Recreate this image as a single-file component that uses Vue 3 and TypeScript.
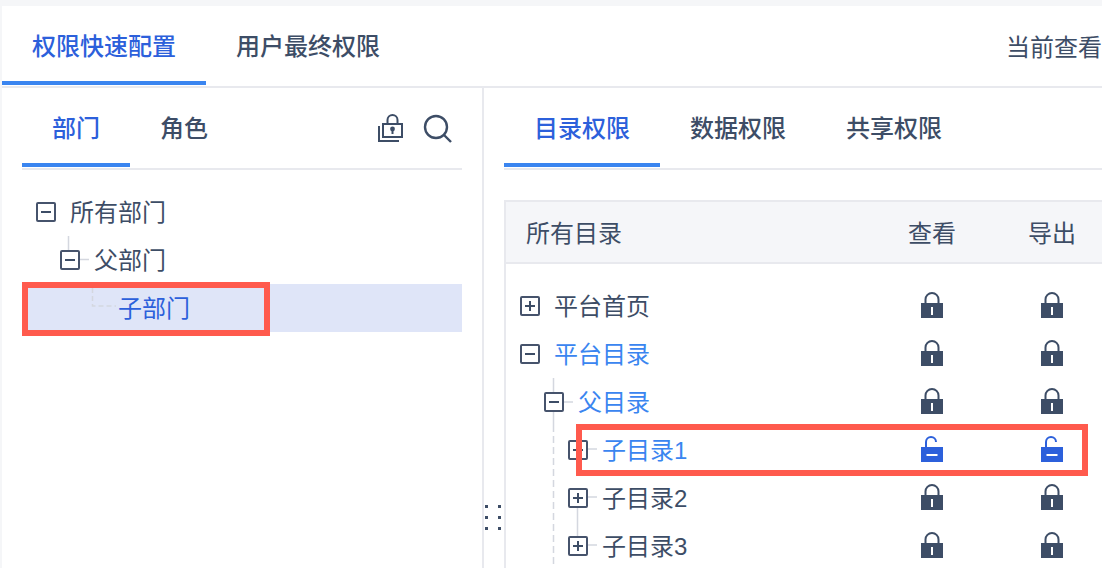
<script setup lang="ts">
interface TreeRow {
  label: string
  level: number
  toggle?: 'plus' | 'minus'
  tone?: 'active' | 'open'
  locks?: 'locked' | 'open'
}

const deptRows: TreeRow[] = [
  { label: '所有部门', level: 0, toggle: 'minus' },
  { label: '父部门', level: 1, toggle: 'minus' },
  { label: '子部门', level: 2, tone: 'active' }
]

const dirRows: TreeRow[] = [
  { label: '平台首页', level: 0, toggle: 'plus', locks: 'locked' },
  { label: '平台目录', level: 0, toggle: 'minus', tone: 'open', locks: 'locked' },
  { label: '父目录', level: 1, toggle: 'minus', tone: 'open', locks: 'locked' },
  { label: '子目录1', level: 2, toggle: 'plus', tone: 'open', locks: 'open' },
  { label: '子目录2', level: 2, toggle: 'plus', locks: 'locked' },
  { label: '子目录3', level: 2, toggle: 'plus', locks: 'locked' }
]

const rowIndent = (row: TreeRow) => ({ paddingLeft: `${14 + row.level * 24}px` })
</script>

<template>
  <div class="page">
    <div class="card">
      <div class="top-bar">
        <div class="tab top-tab active">权限快速配置</div>
        <div class="tab top-tab">用户最终权限</div>
        <div class="viewer">当前查看</div>
      </div>

      <div class="body">
        <aside class="left">
          <div class="sub-tabs">
            <div class="tab sub-tab active">部门</div>
            <div class="tab sub-tab">角色</div>
            <div class="tools">
              <svg class="tool-lock" width="26" height="28" viewBox="0 0 26 28" fill="none" stroke="#3d4d66" stroke-width="2">
                <path d="M1 12V27H21" />
                <rect x="5" y="10" width="19" height="13" />
                <path d="M9.500 10V6a5 5 0 0 1 10 0v4" />
                <circle cx="14.500" cy="15" r="2.400" fill="#3d4d66" stroke="none" />
                <path d="M14.500 16v4" />
              </svg>
              <svg class="tool-search" width="30" height="30" viewBox="0 0 30 30" fill="none" stroke="#3d4d66" stroke-width="2.400">
                <circle cx="13" cy="13" r="11" />
                <path d="M21 21l7 7" />
              </svg>
            </div>
          </div>

          <div class="tree">
            <svg class="connectors" width="440" height="144" fill="none" stroke="#d4d7df" stroke-width="1.500">
              <path d="M46.500 48V62M58 71.500H67" />
              <path d="M70.500 100V118H94" stroke-dasharray="5 3" />
            </svg>
            <div
              v-for="row in deptRows"
              :key="row.label"
              class="tree-row"
              :class="{ selected: row.tone === 'active' }"
              :style="rowIndent(row)"
            >
              <span class="toggle" :class="{ blank: !row.toggle }">
                <i v-if="row.toggle" class="bar"></i>
              </span>
              <span class="label" :class="row.tone">{{ row.label }}</span>
            </div>
          </div>
          <div class="mark mark-dept"></div>
        </aside>

        <section class="right">
          <div class="handle">
            <i v-for="n in 6" :key="n"></i>
          </div>
          <div class="sub-tabs">
            <div class="tab sub-tab active">目录权限</div>
            <div class="tab sub-tab">数据权限</div>
            <div class="tab sub-tab">共享权限</div>
          </div>

          <div class="table">
            <div class="table-head">
              <span class="name-col">所有目录</span>
              <span class="perm-col">查看</span>
              <span class="perm-col">导出</span>
            </div>
            <div class="tree">
              <svg class="connectors" width="200" height="290" fill="none" stroke="#d4d7df" stroke-width="1.500">
                <path d="M47.500 96V143M58 120H67" />
                <path d="M47.500 143V290" stroke-dasharray="7 4" />
                <path d="M71.500 225V256M82 167H91M82 215H91M82 263H91" />
              </svg>
              <div v-for="row in dirRows" :key="row.label" class="tree-row dir-row" :style="rowIndent(row)">
                <span class="toggle">
                  <i class="bar"></i>
                  <i v-if="row.toggle === 'plus'" class="bar upright"></i>
                </span>
                <span class="label name-col" :class="row.tone">{{ row.label }}</span>
                <span v-for="col in 2" :key="col" class="perm-col">
                  <svg v-if="row.locks === 'locked'" class="lock" width="22" height="26" viewBox="0 0 22 26">
                    <path d="M4.500 11V7.500a6.500 6.500 0 0 1 13 0V11" fill="none" stroke="#3d4d66" stroke-width="2" />
                    <rect y="11" width="22" height="15" fill="#3d4d66" />
                    <rect x="10" y="15" width="2" height="8" fill="#fff" />
                  </svg>
                  <svg v-else class="lock" width="22" height="26" viewBox="0 0 22 26">
                    <path d="M5 11V6a5 5 0 0 1 10 0" fill="none" stroke="#2c60db" stroke-width="2" />
                    <rect y="11" width="22" height="15" fill="#2c60db" />
                    <rect x="5.500" y="18" width="11" height="2" fill="#fff" />
                  </svg>
                </span>
              </div>
            </div>
          </div>
          <div class="mark mark-dir"></div>
        </section>
      </div>
    </div>
  </div>
</template>

<style scoped>
.page {
  width: 1102px;
  height: 568px;
  overflow: hidden;
  padding: 6px 0 0 2px;
  box-sizing: border-box;
  background: #f5f6f8;
  color: #3d4d66;
  font-family: "Liberation Sans", "Noto Sans CJK SC", sans-serif;
  font-size: 24px;
}

.card {
  height: 100%;
  display: flex;
  flex-direction: column;
  background: #fff;
}

.top-bar {
  flex: none;
  height: 82px;
  box-sizing: border-box;
  display: flex;
  border-bottom: 2px solid #e8e9ee;
}

.tab {
  flex: none;
  padding: 0 30px;
  font-weight: 500;
  display: flex;
  align-items: center;
  box-sizing: border-box;
  border-bottom: 4px solid transparent;
  line-height: 1;
}

.tab.active {
  color: #2c60db;
  border-bottom-color: #3a85f0;
}

.top-tab {
  height: 79px;
  padding-top: 7px;
}

.viewer {
  margin-left: auto;
  padding-top: 4px;
  line-height: 76px;
}

.body {
  flex: 1;
  min-height: 0;
  display: flex;
}

.left {
  flex: none;
  width: 482px;
  box-sizing: border-box;
  padding: 0 20px;
  border-right: 2px solid #e8e9ee;
  position: relative;
}

.right {
  flex: 1;
  min-width: 0;
  padding: 0 0 0 20px;
  position: relative;
}

.sub-tabs {
  height: 82px;
  box-sizing: border-box;
  display: flex;
  align-items: flex-end;
  border-bottom: 2px solid #e8e9ee;
}

.sub-tab {
  height: 77px;
  margin-bottom: 1px;
  padding-top: 5px;
}

.tools {
  margin-left: auto;
  display: flex;
  align-items: center;
  height: 80px;
}

.tool-lock {
  margin-right: 19px;
}

.tool-search {
  margin-right: 9px;
  margin-top: 2px;
}

.tree {
  position: relative;
  padding-top: 18px;
}

.connectors {
  position: absolute;
  left: 0;
  top: 18px;
  z-index: 1;
}

.tree-row {
  height: 48px;
  display: flex;
  align-items: center;
  box-sizing: border-box;
}

.tree-row.selected {
  background: #dfe5f8;
}

.toggle {
  position: relative;
  z-index: 2;
  flex: none;
  width: 20px;
  height: 20px;
  box-sizing: border-box;
  margin-right: 14px;
  border: 2px solid #46536c;
  border-radius: 2px;
  background: #fff;
}

.toggle.blank {
  border: 0;
  background: none;
}

.bar {
  position: absolute;
  left: 3px;
  top: 7px;
  width: 10px;
  height: 2px;
  background: #3d4d66;
}

.bar.upright {
  left: 7px;
  top: 3px;
  width: 2px;
  height: 10px;
}

.label {
  line-height: 48px;
  margin-top: 2px;
}

.label.active {
  color: #2c60db;
}

.label.open {
  color: #3a85f0;
}

.table {
  margin-top: 30px;
  width: 640px;
  height: 400px;
  border: solid #e8e9ee;
  border-width: 2px 0 0 2px;
}

.table-head {
  height: 62px;
  box-sizing: border-box;
  display: flex;
  align-items: center;
  padding: 0 34px 2px 20px;
  background: #f5f6f9;
  border-bottom: 2px solid #e8e9ee;
}

.dir-row {
  padding-right: 34px;
}

.name-col {
  flex: 1;
  min-width: 0;
}

.perm-col {
  flex: none;
  width: 120px;
  display: flex;
  justify-content: center;
}

.lock {
  display: block;
  margin-top: -2px;
}

.handle {
  position: absolute;
  left: 1px;
  top: 417px;
  display: grid;
  grid-template-columns: 3px 3px;
  column-gap: 10px;
  row-gap: 8px;
}

.handle i {
  width: 3px;
  height: 3px;
  background: #3d4d66;
}

.mark {
  position: absolute;
  z-index: 3;
  box-sizing: border-box;
  border: 6px solid #ff5a4d;
}

.mark-dept {
  left: 20px;
  top: 194px;
  width: 248px;
  height: 54px;
}

.mark-dir {
  left: 92px;
  top: 336px;
  width: 512px;
  height: 52px;
}
</style>

<style>
html,
body {
  margin: 0;
  overflow: hidden;
}
</style>
